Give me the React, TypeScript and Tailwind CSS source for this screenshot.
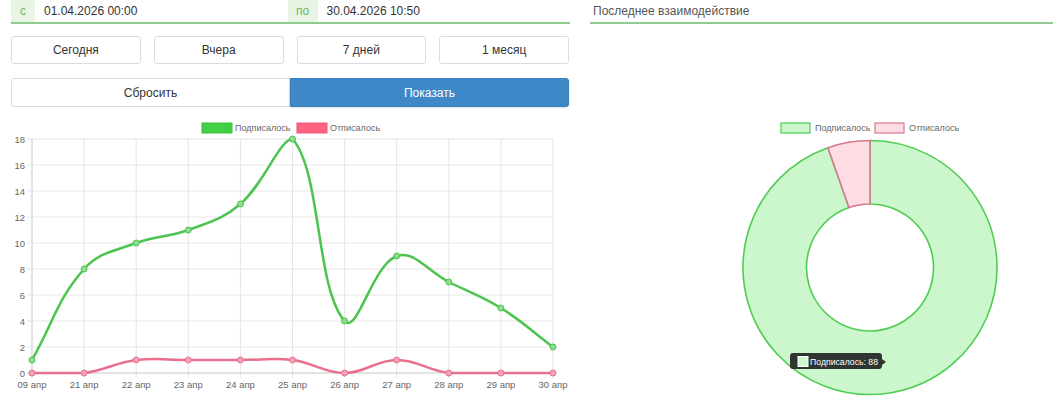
import type {FC} from 'react';

type Pt = {x: number; y: number};

const labels = ['09 апр', '21 апр', '22 апр', '23 апр', '24 апр', '25 апр', '26 апр', '27 апр', '28 апр', '29 апр', '30 апр'];
const subscribed = [1, 8, 10, 11, 13, 18, 4, 9, 7, 5, 2];
const unsubscribed = [0, 0, 1, 1, 1, 1, 0, 1, 0, 0, 0];

const X0 = 32;
const X1 = 553;
const Y0 = 373; // value 0
const Y18 = 139; // value 18
const xAt = (i: number) => X0 + ((X1 - X0) * i) / (labels.length - 1);
const yAt = (v: number) => Y0 - ((Y0 - Y18) * v) / 18;

// chart.js style spline (tension 0.4)
const splinePath = (vals: number[]) => {
    const pts: Pt[] = vals.map((v, i) => ({x: xAt(i), y: yAt(v)}));
    const t = 0.4;
    const ctrl = pts.map((cur, i) => {
        const prev = pts[i - 1] ?? cur;
        const next = pts[i + 1] ?? cur;
        const d01 = Math.hypot(cur.x - prev.x, cur.y - prev.y);
        const d12 = Math.hypot(next.x - cur.x, next.y - cur.y);
        const sum = d01 + d12 || 1;
        const fa = (t * d01) / sum;
        const fb = (t * d12) / sum;
        const clampY = (y: number) => Math.min(Y0, Math.max(Y18, y));
        return {
            prev: {x: cur.x - fa * (next.x - prev.x), y: clampY(cur.y - fa * (next.y - prev.y))},
            next: {x: cur.x + fb * (next.x - prev.x), y: clampY(cur.y + fb * (next.y - prev.y))},
        };
    });
    let d = `M${pts[0].x},${pts[0].y}`;
    for (let i = 1; i < pts.length; i++) {
        const c1 = ctrl[i - 1].next;
        const c2 = ctrl[i].prev;
        d += ` C${c1.x},${c1.y} ${c2.x},${c2.y} ${pts[i].x},${pts[i].y}`;
    }
    return {d, pts};
};

const LineChart: FC = () => {
    const green = splinePath(subscribed);
    const pink = splinePath(unsubscribed);
    const yTicks = [0, 2, 4, 6, 8, 10, 12, 14, 16, 18];

    return (
        <svg width={570} height={290} viewBox="0 115 570 290" className="block font-['Liberation_Sans',Arial,sans-serif]">
            {/* legend */}
            <rect x={202} y={123} width={30} height={10} fill="#43cf47" stroke="#3bbf3f" />
            <text x={235} y={131} fontSize={9} fill="#666">Подписалось</text>
            <rect x={297} y={123} width={30} height={10} fill="#ff6384" stroke="#f0577a" />
            <text x={330} y={131} fontSize={9} fill="#666">Отписалось</text>

            {/* grid */}
            {labels.map((_, i) => (
                <line key={`v${i}`} x1={xAt(i)} y1={Y18} x2={xAt(i)} y2={Y0 + 5} stroke={i === 0 ? '#c8c8c8' : '#e6e6e6'} strokeWidth={1} />
            ))}
            {yTicks.map((v) => (
                <line key={`h${v}`} x1={X0 - 5} y1={yAt(v)} x2={X1} y2={yAt(v)} stroke={v === 0 ? '#c8c8c8' : '#e6e6e6'} strokeWidth={1} />
            ))}
            {yTicks.map((v) => (
                <text key={`yl${v}`} x={25} y={yAt(v) + 3.5} fontSize={9.5} fill="#666" textAnchor="end">{v}</text>
            ))}
            {labels.map((l, i) => (
                <text key={`xl${i}`} x={xAt(i)} y={388} fontSize={9.5} fill="#666" textAnchor="middle">{l}</text>
            ))}

            {/* series */}
            <path d={pink.d} fill="none" stroke="#e8708e" strokeWidth={2.5} />
            {pink.pts.map((p, i) => (
                <circle key={`pp${i}`} cx={p.x} cy={p.y} r={3} fill="#f4a3b6" stroke="#e8708e" strokeWidth={1} />
            ))}
            <path d={green.d} fill="none" stroke="#4cc44f" strokeWidth={2.5} />
            {green.pts.map((p, i) => (
                <circle key={`gp${i}`} cx={p.x} cy={p.y} r={3} fill="#8fdc8f" stroke="#4cc44f" strokeWidth={1} />
            ))}
        </svg>
    );
};

const CX = 870 - 580;
const CY = 267.5;
const RO = 127;
const RI = 63.5;

const arcPoint = (r: number, a: number) => ({x: CX + r * Math.sin(a), y: CY - r * Math.cos(a)});

const segment = (a0: number, a1: number) => {
    const large = a1 - a0 > Math.PI ? 1 : 0;
    const o0 = arcPoint(RO, a0);
    const o1 = arcPoint(RO, a1);
    const i1 = arcPoint(RI, a1);
    const i0 = arcPoint(RI, a0);
    return `M${o0.x},${o0.y} A${RO},${RO} 0 ${large} 1 ${o1.x},${o1.y} L${i1.x},${i1.y} A${RI},${RI} 0 ${large} 0 ${i0.x},${i0.y} Z`;
};

const DonutChart: FC = () => {
    const total = 88 + 5;
    const split = (88 / total) * Math.PI * 2;

    return (
        <svg width={473} height={290} viewBox="0 115 473 290" className="block font-['Liberation_Sans',Arial,sans-serif]">
            <rect x={781 - 580} y={123} width={29} height={10} fill="#ccf7cc" stroke="#4fcc52" strokeWidth={1.2} />
            <text x={815 - 580} y={131} fontSize={9} fill="#666">Подписалось</text>
            <rect x={875 - 580} y={123} width={29} height={10} fill="#ffdde4" stroke="#d9778c" strokeWidth={1.2} />
            <text x={909 - 580} y={131} fontSize={9} fill="#666">Отписалось</text>

            <path d={segment(0, split)} fill="#ccf7cc" stroke="#4fcc52" strokeWidth={1.6} strokeLinejoin="round" />
            <path d={segment(split, Math.PI * 2)} fill="#ffdde4" stroke="#d9778c" strokeWidth={1.6} strokeLinejoin="round" />

            {/* tooltip */}
            <path d={`M${793 - 580},353 h86 a3,3 0 0 1 3,3 v3 l4,3 l-4,3 v1 a3,3 0 0 1 -3,3 h-86 a3,3 0 0 1 -3,-3 v-10 a3,3 0 0 1 3,-3 Z`} fill="#1f1f1f" fillOpacity={0.9} />
            <rect x={798 - 580} y={356.5} width={10} height={10} fill="#ccf7cc" stroke="#ffffff" strokeWidth={1} />
            <text x={810 - 580} y={365} fontSize={9} fill="#ffffff" textLength={68} lengthAdjust="spacingAndGlyphs">Подписалось: 88</text>
        </svg>
    );
};

const App: FC = () => {
    return (
        <div className="w-[1053px] h-[419px] bg-white overflow-hidden flex font-['Liberation_Sans',Arial,sans-serif] text-[12px] text-[#333]">
            <div className="w-[580px] shrink-0 flex flex-col">
                <div className="pl-[11px] pr-[10px]">
                    <div className="flex h-[24px] border-b-2 border-[#8fcb8f]">
                        <div className="w-[24px] bg-[#e8f5e4] text-[#6bb56b] flex items-center justify-center">с</div>
                        <div className="flex-1 flex items-center pl-[9px]">01.04.2026 00:00</div>
                        <div className="w-[30px] bg-[#e8f5e4] text-[#6bb56b] flex items-center justify-center">по</div>
                        <div className="flex-1 flex items-center pl-[9px]">30.04.2026 10:50</div>
                    </div>
                    <div className="grid grid-cols-4 gap-x-[13px] mt-[12px] pr-[1px]">
                        {['Сегодня', 'Вчера', '7 дней', '1 месяц'].map((b) => (
                            <button key={b} className="h-[28px] bg-white border border-[#dcdcdc] rounded-[3px] text-[12px] text-[#333]">
                                {b}
                            </button>
                        ))}
                    </div>
                    <div className="flex mt-[14px] h-[29px] pr-[1px]">
                        <button className="flex-1 bg-white border border-[#dcdcdc] rounded-l-[3px] text-[12px] text-[#333]">Сбросить</button>
                        <button className="flex-1 bg-[#3e88c8] border border-[#3a80bd] rounded-r-[3px] text-[12px] text-white shadow-sm">Показать</button>
                    </div>
                </div>
                <div className="mt-[8px]">
                    <LineChart />
                </div>
            </div>
            <div className="flex-1 flex flex-col">
                <div className="pl-[10px]">
                    <div className="h-[24px] border-b-2 border-[#8fcb8f] flex items-center pl-[3px] text-[#555]">Последнее взаимодействие</div>
                </div>
                <div className="mt-[91px]">
                    <DonutChart />
                </div>
            </div>
        </div>
    );
};

export default App;
